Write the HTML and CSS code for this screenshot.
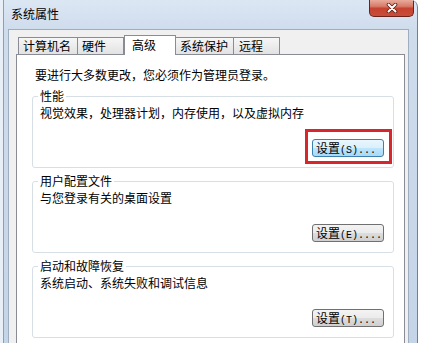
FILE: index.html
```html
<!DOCTYPE html>
<html lang="zh-CN">
<head>
<meta charset="utf-8">
<title>系统属性</title>
<link rel="stylesheet" href="styles.css">
</head>
<body>
<div class="window">
  <div class="titlebar">
    <span class="title">系统属性</span>
    <div class="close">
      <svg width="12" height="10" viewBox="0 0 12 10">
        <path d="M2.5 1.5 L9.5 8.5 M9.5 1.5 L2.5 8.5" stroke="#5b1b14" stroke-width="3.6" stroke-linecap="round"/>
        <path d="M2.5 1.5 L9.5 8.5 M9.5 1.5 L2.5 8.5" stroke="#ffffff" stroke-width="2" stroke-linecap="round"/>
      </svg>
    </div>
  </div>
  <div class="client">
    <div class="tabs">
      <div class="tab t1">计算机名</div>
      <div class="tab t2">硬件</div>
      <div class="tab active">高级</div>
      <div class="tab t4">系统保护</div>
      <div class="tab t5">远程</div>
    </div>
    <div class="panel">
      <p class="intro">要进行大多数更改，您必须作为管理员登录。</p>
      <fieldset class="group">
        <legend>性能</legend>
        <div class="group-body">
          <p class="desc">视觉效果，处理器计划，内存使用，以及虚拟内存</p>
          <div class="actions">
            <div class="mark"><button class="btn hot">设置<span class="key">(S)...</span></button></div>
          </div>
        </div>
      </fieldset>
      <fieldset class="group">
        <legend>用户配置文件</legend>
        <div class="group-body">
          <p class="desc">与您登录有关的桌面设置</p>
          <div class="actions">
            <button class="btn">设置<span class="key">(E)....</span></button>
          </div>
        </div>
      </fieldset>
      <fieldset class="group">
        <legend>启动和故障恢复</legend>
        <div class="group-body">
          <p class="desc">系统启动、系统失败和调试信息</p>
          <div class="actions">
            <button class="btn">设置<span class="key">(T)...</span></button>
          </div>
        </div>
      </fieldset>
    </div>
  </div>
</div>
</body>
</html>
```

FILE: styles.css
```css
html, body {
  margin: 0;
  padding: 0;
  background: #ffffff;
}

body {
  font-family: "Noto Sans CJK SC", "Noto Sans", sans-serif;
  font-size: 12px;
  color: #000;
}

.window {
  width: 418px;
  height: 343px;
  box-sizing: border-box;
  overflow: hidden;
  display: flex;
  flex-direction: column;
  background: linear-gradient(to bottom, #dce7f4 0px, #cfdcec 30px, #c5d4e7 100%);
  border-right: 1px solid #6f8197;
  border-top-right-radius: 7px;
  box-shadow: inset 3px 0 0 #e9eff6, inset 4px 0 0 #8f9eb1;
}

.titlebar {
  height: 29px;
  flex-shrink: 0;
  display: flex;
  align-items: flex-start;
  justify-content: space-between;
  padding-left: 11px;
}

.title {
  line-height: 28px;
  color: #000;
}

.close {
  width: 45px;
  height: 17px;
  box-sizing: border-box;
  margin-right: 3px;
  border: 1px solid #6a2219;
  border-top: none;
  border-radius: 0 0 5px 5px;
  background: linear-gradient(to bottom, #e9ab9c 0%, #d77a68 40%, #c5432f 52%, #c94c3a 100%);
  display: flex;
  align-items: center;
  justify-content: center;
}

.client {
  flex: 1;
  margin: 0 8px;
  background: #f0f0f0;
  border: 1px solid #9eadc0;
  border-bottom: none;
  padding: 0 3px 0 7px;
  display: flex;
  flex-direction: column;
}

.tabs {
  height: 24px;
  flex-shrink: 0;
  display: flex;
  align-items: flex-end;
  padding-left: 2px;
}

.tab {
  box-sizing: border-box;
  height: 17px;
  border: 1px solid #898c95;
  border-bottom: none;
  background: linear-gradient(to bottom, #f6f6f6, #e2e2e2);
  padding-left: 4px;
  line-height: 15px;
  margin-left: -1px;
  white-space: nowrap;
}

.t1 { width: 60px; margin-left: 0; }
.t2 { width: 47px; }
.t4 { width: 59px; }
.t5 { width: 47px; padding-left: 5px; }

.tab.active {
  width: 52px;
  height: 20px;
  margin-left: 0;
  margin-bottom: -1px;
  padding-left: 7px;
  background: #ffffff;
  line-height: 17px;
  position: relative;
  z-index: 1;
}

.panel {
  flex: 1;
  background: #ffffff;
  border: 1px solid #898c95;
  border-bottom: none;
  padding: 0 10px 0 15px;
}

.intro {
  margin: 12px 0 0 3px;
  line-height: 16px;
}

.group {
  margin: 6px 0 0;
  padding: 0;
  border: 1px solid #d5dfe5;
  border-radius: 3px;
  min-width: 0;
}

.group legend {
  padding: 0 2px;
  margin-left: 5px;
  line-height: 14px;
}

.group-body {
  padding: 0 9px 10px 7px;
}

.desc {
  margin: 2px 0 0;
  line-height: 16px;
}

.actions {
  display: flex;
  justify-content: flex-end;
  margin-top: 18px;
}

.mark {
  position: relative;
  display: flex;
}

.mark::after {
  content: "";
  position: absolute;
  left: -7px;
  top: -10px;
  right: -8px;
  bottom: -7px;
  border: 3px solid #d8262d;
  pointer-events: none;
}

.btn {
  box-sizing: border-box;
  width: 72px;
  height: 18px;
  margin: 0;
  padding: 0 0 0 3px;
  border: 1px solid #707070;
  border-radius: 3px;
  background: linear-gradient(to bottom, #f3f3f3 0%, #ebebeb 50%, #dddddd 51%, #cfcfcf 100%);
  font-family: "Noto Sans CJK SC", "Noto Sans", sans-serif;
  font-size: 12px;
  line-height: 16px;
  color: #000;
  text-align: left;
  white-space: nowrap;
}

.btn.hot {
  border-color: #3c7fb1;
  background: linear-gradient(to bottom, #eaf6fd 0%, #d9f0fc 50%, #bee6fd 51%, #a7d9f5 100%);
}

.key {
  font-family: "Liberation Mono", "DejaVu Sans Mono", monospace;
  font-size: 10px;
}
```
